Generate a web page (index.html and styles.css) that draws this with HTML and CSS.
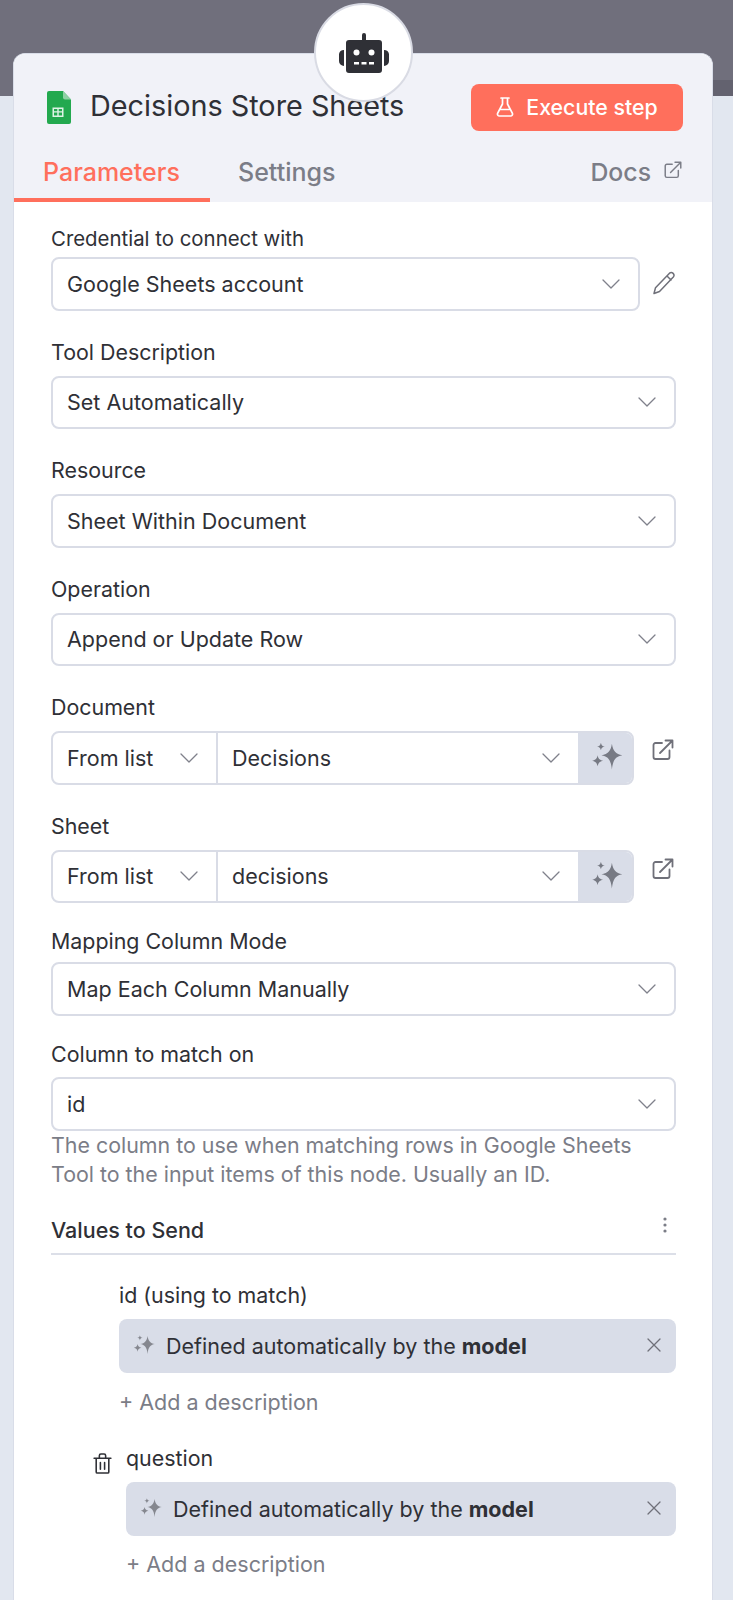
FILE: index.html
```
<!DOCTYPE html>
<html lang="en">
<head>
<meta charset="utf-8">
<title>Decisions Store Sheets</title>
<link rel="stylesheet" href="styles.css">
</head>
<body>
<svg class="defs" width="0" height="0" aria-hidden="true">
  <symbol id="chev" viewBox="0 0 18 10"><path d="M1 1l8 8 8-8" fill="none" stroke="currentColor" stroke-width="1.300" stroke-linecap="round" stroke-linejoin="round"/></symbol>
  <symbol id="ext" viewBox="0 0 22 22"><path d="M10 4H3.500A2 2 0 0 0 1.500 6v12a2 2 0 0 0 2 2h12a2 2 0 0 0 2-2v-6.500M8 14 20.500 1.500M13.500 1.500h7v7" fill="none" stroke="currentColor" stroke-width="1.800" stroke-linecap="round" stroke-linejoin="round"/></symbol>
  <symbol id="spark" viewBox="0 0 30 30"><path d="M19 2.500c1 6.500 3.500 9.500 9.500 10.500-6 1-8.500 4-9.500 13-1-9-3.500-12-9.500-13 6-1 8.500-4 9.500-10.500zM9 1.500c.4 2.200 1.300 3.100 3.500 3.500C10.300 5.400 9.400 6.300 9 8.500 8.600 6.300 7.700 5.400 5.500 5 7.700 4.600 8.600 3.700 9 1.500zM6 13c.6 3 1.700 4.300 5 5-3.300.7-4.400 2-5 5-.6-3-1.700-4.300-5-5 3.300-.7 4.400-2 5-5z" fill="currentColor"/></symbol>
</svg>
<main class="card">
  <div class="avatar">
    <svg class="robot" viewBox="0 0 50 40" aria-hidden="true">
      <path d="M25 0a2 2 0 0 1 2 2v5h13a3 3 0 0 1 3 3v27a3 3 0 0 1-3 3H10a3 3 0 0 1-3-3V10a3 3 0 0 1 3-3h13V2a2 2 0 0 1 2-2z" fill="#2f3036"/>
      <path d="M5 17v16A5 5 0 0 1 0 28v-7a5 5 0 0 1 5-4zM45 17a5 5 0 0 1 5 4v7a5 5 0 0 1-5 5z" fill="#2f3036"/>
      <circle cx="17.500" cy="19.500" r="3" fill="#fff"/><circle cx="32.500" cy="19.500" r="3" fill="#fff"/>
      <path d="M15 29h5v2.500h-5zM22.500 29h5v2.500h-5zM30 29h5v2.500h-5z" fill="#fff"/>
    </svg>
  </div>
  <header class="head">
    <div class="title-row">
      <svg class="sheets" viewBox="0 0 24 33" aria-hidden="true">
        <path d="M2 0h14l8 8.500V31a2 2 0 0 1-2 2H2a2 2 0 0 1-2-2V2a2 2 0 0 1 2-2z" fill="#23a94f"/>
        <path d="M16 0l8 8.500h-6a2 2 0 0 1-2-2z" fill="#8ed1a4"/>
        <path d="M5.500 16.500h11v9.500h-11zM7 18v2.200h3.300V18zM11.700 18v2.200H15V18zM7 21.500v3h3.300v-3zM11.700 21.500v3H15v-3z" fill="#dff3e6" fill-rule="evenodd"/>
      </svg>
      <h1 class="title">Decisions Store Sheets</h1>
      <button class="run" type="button">
        <svg class="flask" viewBox="0 0 18 20" aria-hidden="true"><path d="M5 1h8M6.500 1v6L1.700 16.200A1.900 1.900 0 0 0 3.400 19h11.200a1.900 1.900 0 0 0 1.700-2.800L11.500 7V1M4 12.500h10" fill="none" stroke="#fff" stroke-width="1.700" stroke-linecap="round" stroke-linejoin="round"/></svg>
        Execute step
      </button>
    </div>
    <nav class="tabs">
      <a class="tab tab-active">Parameters</a>
      <a class="tab tab-plain">Settings</a>
      <a class="docs">Docs <svg class="ext-docs"><use href="#ext"/></svg></a>
    </nav>
  </header>
  <section class="form">
    <div class="field field-first">
      <label class="label label-tight">Credential to connect with</label>
      <div class="with-action">
        <div class="select select-grow"><span>Google Sheets account</span><svg class="chev"><use href="#chev"/></svg></div>
        <svg class="pencil" viewBox="0 0 24 24" aria-hidden="true"><path d="M17.500 2.200a2.700 2.700 0 0 1 3.800 3.800L7.500 20.500 2 22.500l1.500-5.700zM15 5l4 4" fill="none" stroke="#6f7079" stroke-width="1.500" stroke-linejoin="round" stroke-linecap="round"/></svg>
      </div>
    </div>
    <div class="field">
      <label class="label">Tool Description</label>
      <div class="select"><span>Set Automatically</span><svg class="chev"><use href="#chev"/></svg></div>
    </div>
    <div class="field">
      <label class="label">Resource</label>
      <div class="select"><span>Sheet Within Document</span><svg class="chev"><use href="#chev"/></svg></div>
    </div>
    <div class="field">
      <label class="label">Operation</label>
      <div class="select"><span>Append or Update Row</span><svg class="chev"><use href="#chev"/></svg></div>
    </div>
    <div class="field">
      <label class="label">Document</label>
      <div class="with-action">
        <div class="locator">
          <div class="loc-mode"><span>From list</span><svg class="chev"><use href="#chev"/></svg></div>
          <div class="loc-value"><span>Decisions</span><svg class="chev"><use href="#chev"/></svg></div>
          <div class="loc-magic"><svg class="spark-lg"><use href="#spark"/></svg></div>
        </div>
        <svg class="ext-link"><use href="#ext"/></svg>
      </div>
    </div>
    <div class="field">
      <label class="label">Sheet</label>
      <div class="with-action">
        <div class="locator">
          <div class="loc-mode"><span>From list</span><svg class="chev"><use href="#chev"/></svg></div>
          <div class="loc-value"><span>decisions</span><svg class="chev"><use href="#chev"/></svg></div>
          <div class="loc-magic"><svg class="spark-lg"><use href="#spark"/></svg></div>
        </div>
        <svg class="ext-link"><use href="#ext"/></svg>
      </div>
    </div>
    <div class="field field-mapping">
      <label class="label label-mapping">Mapping Column Mode</label>
      <div class="select"><span>Map Each Column Manually</span><svg class="chev"><use href="#chev"/></svg></div>
    </div>
    <div class="field field-column">
      <label class="label label-column">Column to match on</label>
      <div class="select"><span>id</span><svg class="chev"><use href="#chev"/></svg></div>
      <p class="help">The column to use when matching rows in Google Sheets Tool to the input items of this node. Usually an ID.</p>
    </div>
    <div class="values-head">
      <span class="values-title">Values to Send</span>
      <svg class="dots" viewBox="0 0 4 16" aria-hidden="true"><circle cx="2" cy="2" r="1.600"/><circle cx="2" cy="8" r="1.600"/><circle cx="2" cy="14" r="1.600"/></svg>
    </div>
    <div class="col col-first">
      <label class="label label-col">id (using to match)</label>
      <div class="auto"><svg class="spark-sm"><use href="#spark"/></svg><span class="auto-text">Defined automatically by the <b>model</b></span><svg class="close" viewBox="0 0 14 14" aria-hidden="true"><path d="M1 1l12 12M13 1L1 13" stroke="currentColor" stroke-width="1.300" stroke-linecap="round"/></svg></div>
      <a class="add">+ Add a description</a>
    </div>
    <div class="col col-second">
      <svg class="trash" viewBox="0 0 18 20" aria-hidden="true"><path d="M1 5h16M6 5V2.500A1.500 1.500 0 0 1 7.500 1h3A1.500 1.500 0 0 1 12 2.500V5M3 5v13a1 1 0 0 0 1 1h10a1 1 0 0 0 1-1V5M7 9v6.500M11 9v6.500" fill="none" stroke="#2f3036" stroke-width="1.500" stroke-linecap="round" stroke-linejoin="round"/></svg>
      <label class="label label-col2">question</label>
      <div class="auto"><svg class="spark-sm"><use href="#spark"/></svg><span class="auto-text">Defined automatically by the <b>model</b></span><svg class="close" viewBox="0 0 14 14" aria-hidden="true"><path d="M1 1l12 12M13 1L1 13" stroke="currentColor" stroke-width="1.300" stroke-linecap="round"/></svg></div>
      <a class="add add-tight">+ Add a description</a>
    </div>
  </section>
</main>
</body>
</html>
```
FILE: styles.css
```
* { box-sizing: border-box; }
html, body { margin: 0; height: 1600px; overflow: hidden; }
body {
  background:
    linear-gradient(#63626f, #63626f) right 80px / 20px 16px no-repeat,
    linear-gradient(#706f7c 0 96px, #e2e7f0 96px);
  font-family: Inter, "Liberation Sans", sans-serif;
  color: #2f3036;
  padding: 53px 20px 0 13px;
}
.defs { position: absolute; }
svg { display: block; flex: none; }

.card {
  position: relative;
  height: 1547px;
  background: #fff;
  border-radius: 12px 12px 0 0;
  border: 1px solid #d9dde8;
  border-bottom: 0;
  overflow: visible;
}
.avatar {
  position: absolute;
  left: 300px;
  top: -51px;
  width: 99px;
  height: 99px;
  border-radius: 50%;
  background: #fff;
  border: 2px solid #d9dbe4;
  display: flex;
  align-items: center;
  justify-content: center;
  z-index: 1;
}
.robot { width: 50px; height: 40px; margin-top: 1px; }

.head { background: #f1f2f8; height: 148px; border-radius: 12px 12px 0 0; }
.title-row { display: flex; align-items: center; height: 77px; padding: 29px 29px 0 33px; margin-bottom: 0; }
.sheets { width: 24px; height: 33px; }
.title { margin: -2px 0 0 19px; font-size: 28.800px; font-weight: 400; line-height: 36px; flex: 1; white-space: nowrap; }
.run {
  width: 212px;
  height: 47px;
  border: 0;
  border-radius: 8px;
  background: #ff6f5c;
  color: #fff;
  font: 500 21.300px Inter, "Liberation Sans", sans-serif;
  display: flex;
  align-items: center;
  justify-content: center;
  gap: 12px;
  padding: 0;
}
.flask { width: 18px; height: 20px; }

.tabs { display: flex; align-items: flex-start; height: 71px; padding-top: 23px; }
.tab { font-size: 25px; line-height: 36px; font-weight: 500; display: block; height: 48px; }
.tab-active { color: #ff6f5c; width: 196px; padding-left: 29px; border-bottom: 4px solid #ff6f5c; }
.tab-plain { color: #7b7d87; margin-left: 28px; }
.docs { margin-left: auto; margin-right: 30px; font-size: 24.800px; line-height: 36px; font-weight: 500; color: #7b7d87; display: flex; align-items: center; gap: 13px; }
.ext-docs { width: 18px; height: 18px; color: #7b7d87; margin-top: -4px; }

.form { padding: 0 36px 0 37px; }
.field { margin-top: 29px; }
.field-first { margin-top: 25px; }
.field-mapping { margin-top: 26px; }
.field-column { margin-top: 26.500px; }
.label { display: block; font-size: 21.400px; line-height: 24px; height: 24px; margin-bottom: 12px; }
.label-tight { margin-bottom: 6px; font-size: 20.400px; }
.label-mapping { margin-bottom: 9px; }
.label-column { margin-bottom: 11px; }

.with-action { display: flex; align-items: flex-start; }
.select {
  height: 53.500px;
  width: 625px;
  border: 2px solid #d9dce6;
  border-radius: 8px;
  background: #fff;
  display: flex;
  align-items: center;
  justify-content: space-between;
  padding: 0 18px 0 14px;
  font-size: 21.500px;
}
.select-grow { width: 590px; }
.chev { width: 18px; height: 10px; color: #7f818b; }
.pencil { width: 24px; height: 24px; margin: 14px 0 0 12px; }

.locator {
  width: 583px;
  height: 53.500px;
  border: 2px solid #d9dce6;
  border-radius: 8px;
  display: flex;
  overflow: hidden;
  font-size: 21.500px;
}
.loc-mode { width: 165px; border-right: 2px solid #d9dce6; display: flex; align-items: center; justify-content: space-between; padding: 0 18px 0 14px; }
.loc-value { flex: 1; display: flex; align-items: center; justify-content: space-between; padding: 0 18px 0 14px; }
.loc-magic { width: 54px; background: #d9dde8; display: flex; align-items: center; justify-content: center; }
.spark-lg { width: 33px; height: 33px; color: #777a84; margin-left: 5px; }
.ext-link { width: 22px; height: 22px; margin: 8px 0 0 18px; color: #6f7079; }

.help { margin: 0; font-size: 21.400px; line-height: 29px; color: #7b7d87; }

.values-head { display: flex; justify-content: space-between; align-items: flex-start; height: 45px; margin-top: 21px; border-bottom: 2px solid #dcdfe8; }
.values-title { font-size: 21.500px; line-height: 24px; font-weight: 500; margin-top: 8px; }
.dots { width: 4px; height: 16px; fill: #7b7d87; margin: 7px 9px 0 0; }

.col { position: relative; }
.col-first { padding-left: 68px; margin-top: 28px; }
.col-second { padding-left: 75px; margin-top: 32px; }
.label-col { margin-bottom: 12px; }
.label-col2 { margin-bottom: 12px; }
.auto {
  height: 54px;
  border-radius: 8px;
  background: #d9dde8;
  display: flex;
  align-items: center;
  padding: 0 15px 0 14px;
  font-size: 21.500px;
}
.spark-sm { width: 23px; height: 23px; color: #85878f; margin-right: 10px; }
.auto-text { flex: 1; white-space: nowrap; }
.auto-text b { font-weight: 700; }
.close { width: 14px; height: 14px; color: #6f7079; margin-top: -2px; }
.add { display: block; font-size: 21.500px; line-height: 24px; color: #7b7d87; margin-top: 17px; }
.add-tight { margin-top: 16px; }
.trash { position: absolute; left: 42px; top: 7px; width: 19px; height: 21px; }
```
